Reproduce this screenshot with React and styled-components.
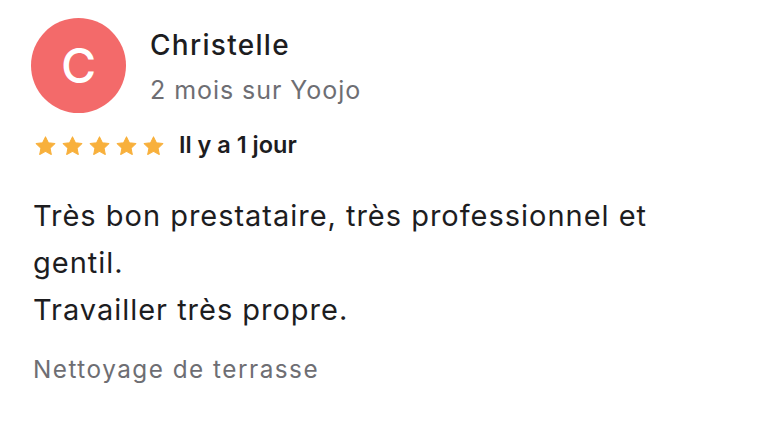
import React from 'react'
import styled, { createGlobalStyle } from 'styled-components'

const Global = createGlobalStyle`
  html, body { margin: 0; padding: 0; background: #ffffff; }
  body { font-family: Inter, 'Noto Sans', sans-serif; }
`

const Card = styled.div`
  display: flex;
  flex-direction: column;
  width: 768px;
  height: 427px;
  padding: 18px 0 0 33px;
  box-sizing: border-box;
  background: #fff;
`

const Header = styled.div`
  display: flex;
  align-items: flex-start;
  gap: 24px;
`

const Avatar = styled.div`
  flex: none;
  width: 95px;
  height: 95px;
  border-radius: 50%;
  background: #f36a6a;
  color: #fff;
  display: flex;
  align-items: center;
  justify-content: center;
  font-size: 48px;
  font-weight: 500;
  line-height: 1;
  margin-left: -2px;
`

const Who = styled.div`
  display: flex;
  flex-direction: column;
  gap: 13px;
  margin-top: 10px;
`

const Name = styled.div`
  font-size: 28px;
  line-height: 34px;
  font-weight: 500;
  color: #1d1d1f;
  letter-spacing: 1.3px;
`

const Since = styled.div`
  font-size: 25px;
  line-height: 30px;
  color: #6e6e73;
  letter-spacing: 0.95px;
`

const RatingRow = styled.div`
  display: flex;
  align-items: center;
  gap: 15px;
  margin-top: 18px;
  height: 28px;
`

const Stars = styled.div`
  display: flex;
  gap: 6px;
  margin-left: 2px;
  color: #f8b03c;
`

const When = styled.span`
  font-size: 23.5px;
  line-height: 28px;
  font-weight: 600;
  color: #1d1d1f;
`

const Body = styled.p`
  margin: 33px 0 0;
  font-size: 29px;
  line-height: 47px;
  color: #1d1d1f;
  letter-spacing: 0.98px;
  width: 680px;
`

const Tag = styled.div`
  margin-top: 21px;
  font-size: 24.3px;
  line-height: 30px;
  color: #6e6e73;
  letter-spacing: 1.5px;
`

const Star = () => (
  <svg width="21" height="19" viewBox="0 0 24 22" fill="currentColor">
    <path d="M12 1l3.3 6.8 7.5 1-5.5 5.2 1.4 7.4L12 17.8l-6.7 3.6 1.4-7.4L1.2 8.8l7.5-1z" strokeLinejoin="round" stroke="currentColor" strokeWidth="1.2" />
  </svg>
)

export default function App() {
  return (
    <>
      <Global />
      <Card>
        <Header>
          <Avatar>C</Avatar>
          <Who>
            <Name>Christelle</Name>
            <Since>2 mois sur Yoojo</Since>
          </Who>
        </Header>
        <RatingRow>
          <Stars>
            <Star /><Star /><Star /><Star /><Star />
          </Stars>
          <When>Il y a 1 jour</When>
        </RatingRow>
        <Body>
          Très bon prestataire, très professionnel et gentil.
          <br />
          Travailler très propre.
        </Body>
        <Tag>Nettoyage de terrasse</Tag>
      </Card>
    </>
  )
}
